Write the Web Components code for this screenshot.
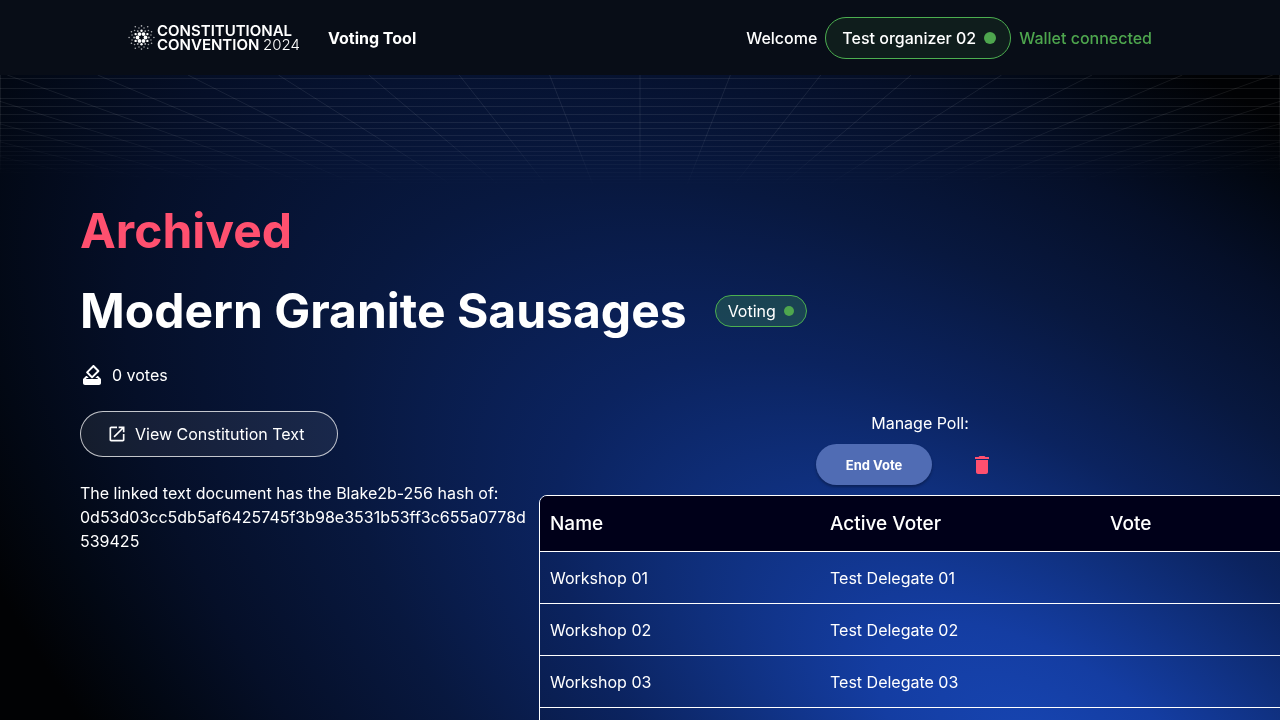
<!DOCTYPE html>
<html lang="en">
<head>
<meta charset="utf-8">
<title>Voting Tool</title>
<style>
  html { background: #000; }
  body { margin: 0; color: #fff; font: 400 16px/24px Inter, "Liberation Sans", sans-serif; overflow-x: hidden; }
</style>
</head>
<body>
<poll-page></poll-page>
<script>
const define = (name, html, setup) => customElements.define(name, class extends HTMLElement {
  connectedCallback() {
    if (this.shadowRoot) return;
    const template = document.createElement('template');
    template.innerHTML = html;
    this.attachShadow({ mode: 'open' }).append(template.content.cloneNode(true));
    if (setup) setup(this, this.shadowRoot);
  }
});

/* Blue glow with the fading perspective grid above it. */
define('page-backdrop', `
  <style>
    :host { position: fixed; inset: 0; z-index: -1; overflow: hidden; background: #000; }
    .glow { position: absolute; inset: 0; width: 100%; height: 100%; }
    .grid { position: absolute; top: 75px; left: 0; width: 100%; height: 115px; }
  </style>
  <svg class="glow" viewBox="0 0 1280 720" preserveAspectRatio="none" aria-hidden="true">
    <defs>
      <radialGradient id="g" gradientUnits="userSpaceOnUse" cx="0" cy="0" r="1" gradientTransform="translate(1060 770) rotate(36) scale(1400 660)">
        <stop offset="0" stop-color="#1746b4"/>
        <stop offset=".15" stop-color="#143da2"/>
        <stop offset=".3" stop-color="#0f2f7c"/>
        <stop offset=".42" stop-color="#0b235f"/>
        <stop offset=".6" stop-color="#08183f"/>
        <stop offset=".78" stop-color="#050f28"/>
        <stop offset=".9" stop-color="#020814"/>
        <stop offset="1" stop-color="#010204"/>
      </radialGradient>
    </defs>
    <rect width="1280" height="720" fill="url(#g)"/>
  </svg>
  <svg class="grid" viewBox="0 0 1280 115" preserveAspectRatio="none" aria-hidden="true">
    <defs>
      <radialGradient id="f" gradientUnits="userSpaceOnUse" cx="0" cy="0" r="1" gradientTransform="translate(640 0) scale(1500 114)">
        <stop offset="0" stop-color="#fff"/><stop offset=".5" stop-color="#fff"/><stop offset="1" stop-color="#000"/>
      </radialGradient>
      <mask id="m"><rect width="1280" height="115" fill="url(#f)"/></mask>
    </defs>
    <g mask="url(#m)" stroke="#fff" stroke-opacity=".08" fill="none"></g>
  </svg>`, (host, root) => {
  const g = root.querySelector('g');
  let d = 'M.5 0V115M1279.5 0V115';
  for (let i = -14; i <= 14; i++) d += `M${640 + i * 90.4} 0L${640 + i * 45.2} 114.5`;
  for (const y of [3.5, 13.5, 23.5, 31.5, 39.5, 47.5, 53.5, 60.5, 65.5, 71.5, 76.5, 80.5, 85.5, 89.5, 93.5, 97.5, 101.5, 104.5, 107.5]) d += `M0 ${y}H1280`;
  g.innerHTML = `<path d="${d}"/>`;
});

define('convention-logo', `
  <style>
    :host { display: block; width: 168px; }
    a { display: flex; align-items: center; gap: 2px; color: #fff; text-decoration: none; }
    svg { flex: none; width: 27px; height: 27px; }
    b { display: block; font: 600 15px/14px Inter, sans-serif; white-space: nowrap; }
    i { font-weight: 300; font-style: normal; }
  </style>
  <a href="#"><svg viewBox="-13.5 -13.5 27 27" fill="#fff" aria-hidden="true"></svg>
  <span><b>CONSTITUTIONAL</b><b>CONVENTION <i>2024</i></b></span></a>`, (host, root) => {
  const ring = (count, radius, size, turn, opacity = 1) => Array.from({ length: count }, (_, k) => {
    const a = (turn + k * 360 / count) * Math.PI / 180;
    return `<circle cx="${(radius * Math.cos(a)).toFixed(2)}" cy="${(radius * Math.sin(a)).toFixed(2)}" r="${size}" opacity="${opacity}"/>`;
  }).join('');
  root.querySelector('svg').innerHTML =
    ring(6, 4, 1.9, 0) + ring(6, 6.8, 1.2, 30) + ring(6, 7.4, .9, 0, .7) +
    ring(12, 9.8, .8, 15, .6) + ring(6, 11.6, .8, 30, .7) + ring(6, 12.4, .8, 0, .7);
});

define('status-pill', `
  <style>
    :host { display: inline-flex; align-items: center; box-sizing: border-box; gap: 8px; height: 32px; padding: 0 12px;
      border: 1px solid #4caf50; border-radius: 100px; background: rgba(76,175,80,.25); white-space: nowrap; }
    :host([large]) { height: 42px; padding: 0 14px 0 16px; background: rgba(76,175,80,.1); font-weight: 500; }
    span { width: 10px; height: 10px; border-radius: 50%; background: #4ea64e; }
    :host([large]) span { width: 12px; height: 12px; }
  </style><slot></slot><span></span>`);

define('app-header', `
  <style>
    :host { display: block; background: #080d17; }
    header { display: flex; align-items: center; justify-content: space-between; height: 75px; padding: 0 10%; font-weight: 500; }
    div { display: flex; align-items: center; gap: 8px; }
    .brand { gap: 32px; }
    .tool { font-weight: 700; }
    .wallet { color: #4ea64e; }
  </style>
  <header>
    <div class="brand"><convention-logo></convention-logo><span class="tool">Voting Tool</span></div>
    <div><span>Welcome</span><status-pill large>Test organizer 02</status-pill><span class="wallet">Wallet connected</span></div>
  </header>`);

define('poll-summary', `
  <style>
    :host { display: block; }
    h1 { margin: 0; font-size: 48px; line-height: 56px; font-weight: 700; }
    .archived { color: #ff506f; }
    .title { display: flex; align-items: center; gap: 28px; margin-top: 24px; }
    .votes { display: flex; align-items: center; gap: 8px; margin: 24px 0 0; }
    svg { width: 24px; height: 24px; fill: currentColor; }
  </style>
  <h1 class="archived">Archived</h1>
  <div class="title"><h1>Modern Granite Sausages</h1><status-pill>Voting</status-pill></div>
  <p class="votes"><svg viewBox="0 0 24 24" aria-hidden="true"><path d="M18 13h-.68l-2 2h1.91L19 17H5l1.78-2h2.05l-2-2H6l-3 3v4c0 1.100.890 2 1.990 2H19c1.100 0 2-.890 2-2v-4zm-1-5.050-4.950 4.950-3.540-3.540 4.950-4.950zm-4.240-5.660L6.390 8.660c-.390.390-.390 1.020 0 1.410l4.950 4.950c.390.390 1.020.390 1.410 0l6.360-6.360c.390-.390.390-1.020 0-1.410L14.160 2.300c-.380-.400-1.010-.400-1.400-.010"/><path d="M4 16h16v5H4z"/></svg>0 votes</p>`);

define('document-link', `
  <style>
    :host { display: block; }
    a { display: inline-flex; align-items: center; box-sizing: border-box; gap: 8px; height: 46px; padding: 0 32px 0 26px;
      border: 1px solid rgba(255,255,255,.75); border-radius: 100px; background: rgba(255,255,255,.07); color: #fff; text-decoration: none; }
    svg { width: 20px; height: 20px; fill: currentColor; }
    p { margin: 24px 0 0; }
  </style>
  <a href="#"><svg viewBox="0 0 24 24" aria-hidden="true"><path d="M19 19H5V5h7V3H5c-1.110 0-2 .900-2 2v14c0 1.100.890 2 2 2h14c1.100 0 2-.900 2-2v-7h-2zM14 3v2h3.590l-9.830 9.830 1.410 1.410L19 6.410V10h2V3z"/></svg>View Constitution Text</a>
  <p>The linked text document has the Blake2b-256 hash of:<br>0d53d03cc5db5af6425745f3b98e3531b53ff3c655a0778d<br>539425</p>`);

define('poll-controls', `
  <style>
    :host { display: flex; flex-direction: column; align-items: center; }
    div { display: flex; gap: 8px; margin-top: 9px; }
    button { display: flex; align-items: center; height: 41px; padding: 0 30px; border: 0; border-radius: 100px; color: #fff; font: 700 13px/24px Inter, sans-serif; }
    .end { background: #506cb4; box-shadow: 0 2px 3px rgba(0,0,0,.3); }
    .delete { background: none; color: #ff506f; }
    svg { width: 24px; height: 24px; fill: currentColor; }
  </style>
  <span>Manage Poll:</span>
  <div><button class="end">End Vote</button>
  <button class="delete" aria-label="Delete poll"><svg viewBox="0 0 24 24" aria-hidden="true"><path d="M6 19c0 1.100.900 2 2 2h8c1.100 0 2-.900 2-2V7H6zM19 4h-3.500l-1-1h-5l-1 1H5v2h14z"/></svg></button></div>`);

define('voter-table', `
  <style>
    :host { display: block; box-sizing: border-box; width: 762px; border: 1px solid #fff; border-radius: 8px; overflow: hidden; }
    table { width: 840px; table-layout: fixed; border-collapse: separate; border-spacing: 0; text-align: left; }
    th, td { box-sizing: border-box; padding: 0 10px; border-bottom: 1px solid #fff; font-weight: 400; }
    th { height: 56px; background: #000019; font-size: 19px; font-weight: 500; }
    td { height: 52px; }
  </style>
  <table><thead><tr><th scope="col">Name</th><th scope="col">Active Voter</th><th scope="col">Vote</th></tr></thead><tbody></tbody></table>`, (host, root) => {
  root.querySelector('tbody').innerHTML = ['01', '02', '03']
    .map(n => `<tr><td>Workshop ${n}</td><td>Test Delegate ${n}</td><td></td></tr>`).join('') + '<tr><td></td><td></td><td></td></tr>';
});

define('poll-page', `
  <style>
    :host { display: block; position: relative; z-index: 0; height: 100vh; overflow: hidden; }
    main { padding: 128px 80px 0; }
    .columns { display: grid; grid-template-columns: 1fr 1fr; margin-top: 24px; }
    .manage { display: flex; flex-direction: column; align-items: center; gap: 10px; position: relative; min-width: 0; }
    voter-table { flex-shrink: 0; }
  </style>
  <page-backdrop></page-backdrop>
  <app-header></app-header>
  <main>
    <poll-summary></poll-summary>
    <div class="columns">
      <document-link></document-link>
      <div class="manage"><poll-controls></poll-controls><voter-table></voter-table></div>
    </div>
  </main>`);
</script>
</body>
</html>
